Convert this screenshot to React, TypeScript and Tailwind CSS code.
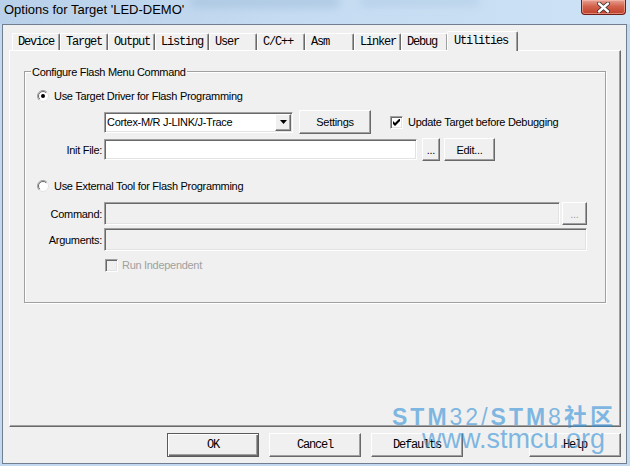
import React from 'react';

const sans = "font-['Liberation_Sans',Arial,sans-serif] text-[11px] tracking-[-0.3px] leading-[14px]";
const mono = "font-['Liberation_Mono','Courier_New',monospace] text-[12px] tracking-[-1.2px] leading-[14px]";

const raised =
  'border border-t-white border-l-white border-r-[#696969] border-b-[#696969] shadow-[inset_-1px_-1px_0_#a0a0a0] bg-[#f0f0f0]';
const sunken =
  'border border-t-[#a0a0a0] border-l-[#a0a0a0] border-r-white border-b-white shadow-[inset_1px_1px_0_#696969,inset_-1px_-1px_0_#e3e3e3]';

const tabs = [
  { label: 'Device', w: 'w-[48px]' },
  { label: 'Target', w: 'w-[48px]' },
  { label: 'Output', w: 'w-[47px]' },
  { label: 'Listing', w: 'w-[54px]' },
  { label: 'User', w: 'w-[48px]' },
  { label: 'C/C++', w: 'w-[48px]' },
  { label: 'Asm', w: 'w-[49px]' },
  { label: 'Linker', w: 'w-[47px]' },
  { label: 'Debug', w: 'w-[47px]' },
];

function Radio({ checked }: { checked?: boolean }) {
  return (
    <svg width="12" height="12" viewBox="0 0 12 12" className="shrink-0">
      <circle cx="6" cy="6" r="5.5" fill="#fff" stroke="#e3e3e3" />
      <path d="M2.1 9.9 A5.5 5.5 0 0 1 9.9 2.1" fill="none" stroke="#a0a0a0" />
      <path d="M2.8 9.2 A4.5 4.5 0 0 1 9.2 2.8" fill="none" stroke="#696969" />
      {checked && <circle cx="6" cy="6" r="2" fill="#000" />}
    </svg>
  );
}

function Check({ checked, disabled }: { checked?: boolean; disabled?: boolean }) {
  return (
    <span
      className={`${sunken} ${disabled ? 'bg-[#f0f0f0]' : 'bg-white'} w-[13px] h-[13px] flex items-center justify-center shrink-0`}
    >
      {checked && (
        <svg width="7" height="7" viewBox="0 0 7 7">
          <path d="M0 2 L2 4 L7 -1 L7 2 L2 7 L0 5 Z" fill="#000" />
        </svg>
      )}
    </span>
  );
}

function Btn({ children, className = '' }: { children: React.ReactNode; className?: string }) {
  return (
    <button type="button" className={`${raised} flex items-center justify-center ${className}`}>
      {children}
    </button>
  );
}

function GroupBox() {
  return (
    <div className="relative ml-[14px] mt-[20px] w-[582px] h-[232px] border border-[#a0a0a0] shadow-[inset_1px_1px_0_#fff,1px_1px_0_#fff] flex flex-col">
      <span className="absolute left-[6px] top-[-7px] px-[1px] bg-[#f0f0f0]">
        Configure Flash Menu Command
      </span>

      <div className="mt-[16px] h-[16px] pl-[12px] flex items-center gap-[5px]">
        <Radio checked />
        <span>Use Target Driver for Flash Programming</span>
      </div>

      <div className="mt-[6px] h-[24px] flex items-center">
        <div className={`${sunken} ml-[79px] bg-white w-[189px] h-[21px] flex items-center`}>
          <span className="pl-[2px] flex-1">Cortex-M/R J-LINK/J-Trace</span>
          <span className={`${raised} w-[16px] h-[17px] mr-[1px] flex items-center justify-center`}>
            <svg width="7" height="4" viewBox="0 0 7 4">
              <path d="M0 0h7L3.5 4z" fill="#000" />
            </svg>
          </span>
        </div>
        <Btn className="ml-[6px] w-[72px] h-[24px]">Settings</Btn>
        <div className="ml-[19px] flex items-center gap-[5px]">
          <Check checked />
          <span>Update Target before Debugging</span>
        </div>
      </div>

      <div className="mt-[4px] h-[23px] flex items-center">
        <span className="w-[79px] pr-[2px] text-right">Init File:</span>
        <div className={`${sunken} bg-white w-[313px] h-[21px]`} />
        <Btn className="ml-[5px] w-[18px] h-[23px]">...</Btn>
        <Btn className="ml-[4px] w-[51px] h-[23px]">Edit...</Btn>
      </div>

      <div className="mt-[17px] h-[16px] pl-[12px] flex items-center gap-[5px]">
        <Radio />
        <span>Use External Tool for Flash Programming</span>
      </div>

      <div className="mt-[8px] h-[23px] flex items-center">
        <span className="w-[79px] pr-[2px] text-right">Command:</span>
        <div className={`${sunken} bg-[#f0f0f0] w-[456px] h-[23px]`} />
        <Btn className="ml-[2px] w-[25px] h-[23px] text-[#a0a0a0]">...</Btn>
      </div>

      <div className="mt-[3px] h-[23px] flex items-center">
        <span className="w-[79px] pr-[2px] text-right">Arguments:</span>
        <div className={`${sunken} bg-[#f0f0f0] w-[483px] h-[23px]`} />
      </div>

      <div className="mt-[6px] h-[16px] ml-[80px] flex items-center gap-[4px]">
        <Check disabled />
        <span className="text-[#a0a0a0]">Run Independent</span>
      </div>
    </div>
  );
}

export default function App() {
  return (
    <div className={`relative w-[630px] h-[466px] overflow-hidden bg-[#c3d9ef] ${sans} text-black`}>
      {/* aero title bar */}
      <div className="relative h-[24px] flex justify-between bg-[linear-gradient(90deg,#b8d0e9,#c4dbf1_45%,#cde2f5)] overflow-hidden">
        <div className="absolute left-[190px] top-[-3px] w-[150px] h-[10px] rounded-full bg-[#9fbcd9] opacity-60 blur-[4px]" />
        <div className="absolute left-[360px] top-[-2px] w-[120px] h-[8px] rounded-full bg-[#a8c4df] opacity-50 blur-[4px]" />
        <span className="relative pl-[4px] pt-[2px] font-['Liberation_Sans',Arial,sans-serif] text-[13px] leading-[15px] tracking-normal text-black">
          Options for Target 'LED-DEMO'
        </span>
        <div className="relative mr-[4px] w-[45px] h-[15px] rounded-b-[4px] border border-t-0 border-[#6b1f16] bg-[linear-gradient(180deg,#e6a293,#d3624c_45%,#c0402c)] shadow-[inset_0_0_0_1px_rgba(255,200,190,0.5)] flex items-center justify-center">
          <svg width="13" height="11" viewBox="0 0 13 11">
            <path d="M2 1.5 L11 9.5 M11 1.5 L2 9.5" stroke="#3a2a2a" strokeWidth="4" strokeLinecap="round" />
            <path d="M2 1.5 L11 9.5 M11 1.5 L2 9.5" stroke="#fff" strokeWidth="2.4" strokeLinecap="round" />
          </svg>
        </div>
      </div>

      {/* client area */}
      <div className="ml-[2px] w-[625px] h-[440px] border border-[#6f7f90] bg-[#f0f0f0] flex flex-col">
        <div className={`mt-[6px] h-[19px] pl-[9px] flex ${mono}`}>
          {tabs.map((t) => (
            <div
              key={t.label}
              className={`${t.w} h-[17px] self-end pl-[5px] flex items-center border-t border-l border-r border-t-white border-l-white border-r-[#696969] shadow-[inset_-1px_0_0_#a0a0a0] rounded-t-[2px]`}
            >
              {t.label}
            </div>
          ))}
          <div className="relative z-10 ml-[-1px] w-[71px] h-[20px] self-start pl-[6px] pb-[2px] flex items-center bg-[#f0f0f0] border-t border-l border-r border-t-white border-l-white border-r-[#696969] shadow-[inset_-1px_0_0_#a0a0a0] rounded-t-[2px]">
            Utilities
          </div>
        </div>

        <div className="ml-[6px] w-[612px] h-[377px] border border-t-white border-l-white border-r-[#696969] border-b-[#696969] shadow-[inset_-1px_-1px_0_#a0a0a0]">
          <GroupBox />
        </div>

        <div className={`mt-[6px] h-[24px] flex ${mono}`}>
          <button
            type="button"
            className="ml-[164px] w-[92px] h-[24px] border border-[#5a5a5a] bg-[#f0f0f0] shadow-[inset_1px_1px_0_#fff,inset_-1px_-1px_0_#696969,inset_-2px_-2px_0_#a0a0a0]"
          >
            OK
          </button>
          <Btn className="ml-[10px] w-[92px] h-[24px]">Cancel</Btn>
          <Btn className="ml-[10px] w-[92px] h-[24px]">Defaults</Btn>
          <Btn className="ml-[66px] w-[92px] h-[24px]">Help</Btn>
        </div>
      </div>

      {/* site watermark */}
      <div className="absolute left-[392px] top-[406px] text-[23px] leading-[23px] tracking-[3px] text-[#2f8fd6]/60 font-['Liberation_Sans','Noto_Sans_CJK_SC',sans-serif] whitespace-nowrap pointer-events-none">
        <span className="font-bold">STM</span>
        <span>32/</span>
        <span className="font-bold">STM</span>
        <span>8</span>
        <span className="font-bold">社区</span>
      </div>
      <div className="absolute left-[422px] top-[426px] text-[27px] leading-[27px] tracking-normal text-[#2f8fd6]/60 font-['Liberation_Sans',sans-serif] whitespace-nowrap pointer-events-none">
        www.stmcu.org
      </div>
    </div>
  );
}
